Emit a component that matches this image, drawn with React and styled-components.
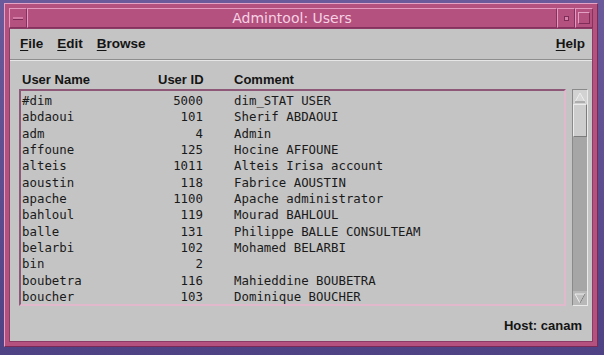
import React from "react";
import styled, { createGlobalStyle } from "styled-components";

const users = [
  ["#dim", "5000", "dim_STAT USER"],
  ["abdaoui", "101", "Sherif ABDAOUI"],
  ["adm", "4", "Admin"],
  ["affoune", "125", "Hocine AFFOUNE"],
  ["alteis", "1011", "Alteis Irisa account"],
  ["aoustin", "118", "Fabrice AOUSTIN"],
  ["apache", "1100", "Apache administrator"],
  ["bahloul", "119", "Mourad BAHLOUL"],
  ["balle", "131", "Philippe BALLE CONSULTEAM"],
  ["belarbi", "102", "Mohamed BELARBI"],
  ["bin", "2", ""],
  ["boubetra", "116", "Mahieddine BOUBETRA"],
  ["boucher", "103", "Dominique BOUCHER"],
];

const GlobalStyle = createGlobalStyle`
  body {
    margin: 0;
    background: #5b4c8c;
    font-family: "Liberation Sans", Arial, sans-serif;
  }
`;

const Desktop = styled.div`
  width: 604px;
  height: 355px;
  background: linear-gradient(180deg, #6a5a9c 0%, #4f4284 100%);
  padding: 3px 6px 8px 4px;
  box-sizing: border-box;
`;

const Window = styled.div`
  height: 100%;
  display: flex;
  flex-direction: column;
  background: #b4517f;
  border: 1px solid #e6a2c4;
  border-right-color: #7a2a56;
  border-bottom-color: #7a2a56;
  padding: 4px;
  box-sizing: border-box;
`;

const TitleBar = styled.div`
  height: 20px;
  display: flex;
  align-items: stretch;
`;

const FrameButton = styled.div`
  width: 18px;
  display: flex;
  align-items: center;
  justify-content: center;
  border: 1px solid #e49ac0;
  border-right-color: #86325e;
  border-bottom-color: #86325e;
  box-sizing: border-box;
`;

const Dash = styled.span`
  width: 10px;
  height: 2px;
  background: #d27aa4;
  border-bottom: 1px solid #7e2c58;
`;

const Dot = styled.span`
  width: 3px;
  height: 3px;
  background: #d680aa;
  border: 1px solid #7e2c58;
`;

const Square = styled.span`
  width: 10px;
  height: 10px;
  border: 1px solid #e2a0c2;
  border-right-color: #7e2c58;
  border-bottom-color: #7e2c58;
`;

const Title = styled.div`
  flex: 1;
  display: flex;
  align-items: center;
  justify-content: center;
  color: #f6d2e4;
  font-family: "DejaVu Sans", sans-serif;
  font-size: 14px;
  border: 1px solid #e49ac0;
  border-right-color: #86325e;
  border-bottom-color: #86325e;
`;

const Body = styled.div`
  flex: 1;
  display: flex;
  flex-direction: column;
  background: #c4c4c4;
  border: 1px solid #8c3a66;
`;

const MenuBar = styled.div`
  height: 29px;
  display: flex;
  align-items: center;
  padding: 0 7px 1px 10px;
  gap: 14px;
  border-bottom: 1px solid #8e8e8e;
  box-shadow: 0 1px 0 #e6e6e6;
`;

const MenuItem = styled.span`
  font-weight: bold;
  font-size: 13.5px;
  color: #141414;
  margin-left: ${({ push }) => (push ? "auto" : "0")};
`;

const Key = styled.span`
  text-decoration: underline;
  text-underline-offset: 2px;
`;

const Content = styled.div`
  flex: 1;
  display: flex;
  flex-direction: column;
  padding: 10px 4px 0 9px;
`;

const HeaderRow = styled.div`
  display: grid;
  grid-template-columns: 136px 76px 1fr;
  padding-left: 3px;
  height: 18px;
  align-items: center;
  font-weight: bold;
  font-size: 13px;
  color: #141414;
`;

const ListRow = styled.div`
  display: flex;
  gap: 6px;
  margin-top: 1px;
  height: 217px;
`;

const ListBox = styled.div`
  flex: 1;
  border: 2px solid #e2b8cc;
  border-top-color: #8e5878;
  border-left-color: #8e5878;
  padding: 2px 0 0 1px;
  overflow: hidden;
  font-family: "DejaVu Sans Mono", "Liberation Mono", monospace;
  font-size: 12.4px;
  color: #1a1a1a;
`;

const Row = styled.div`
  display: grid;
  grid-template-columns: 120px 61px 1fr;
  height: 16.33px;
  line-height: 16px;
  white-space: pre;
`;

const Id = styled.span`
  text-align: right;
`;

const Comment = styled.span`
  padding-left: 31px;
`;

const ScrollBar = styled.div`
  width: 16px;
  display: flex;
  flex-direction: column;
  background: #a6a6a6;
  border: 1px solid #8a8a8a;
  border-right-color: #eaeaea;
  border-bottom-color: #eaeaea;
  box-sizing: border-box;
`;

const Arrow = styled.div`
  height: 14px;
  display: flex;
  align-items: center;
  justify-content: center;
  background: ${({ up }) => (up ? "#d2d2d2" : "#b8b8b8")};
`;

const Thumb = styled.div`
  height: 31px;
  background: #cdcdcd;
  border: 1px solid #ececec;
  border-right-color: #7c7c7c;
  border-bottom-color: #7c7c7c;
`;

const Track = styled.div`
  flex: 1;
`;

const Footer = styled.div`
  flex: 1;
  display: flex;
  align-items: center;
  justify-content: flex-end;
  padding: 4px 6px 0 0;
  font-weight: bold;
  font-size: 13px;
  color: #141414;
`;

function Triangle({ down }) {
  return (
    <svg width="12" height="11" viewBox="0 0 12 11">
      <polygon
        points={down ? "1,1 11,1 6,10" : "6,1 11,10 1,10"}
        fill={down ? "#c0c0c0" : "#d8d8d8"}
        stroke="#ededed"
      />
      <polyline
        points={down ? "11,1 6,10" : "11,10 1,10"}
        fill="none"
        stroke="#7a7a7a"
      />
    </svg>
  );
}

export default function App() {
  return (
    <>
      <GlobalStyle />
      <Desktop>
        <Window>
          <TitleBar>
            <FrameButton>
              <Dash />
            </FrameButton>
            <Title>Admintool: Users</Title>
            <FrameButton>
              <Dot />
            </FrameButton>
            <FrameButton>
              <Square />
            </FrameButton>
          </TitleBar>
          <Body>
            <MenuBar>
              <MenuItem>
                <Key>F</Key>ile
              </MenuItem>
              <MenuItem>
                <Key>E</Key>dit
              </MenuItem>
              <MenuItem>
                <Key>B</Key>rowse
              </MenuItem>
              <MenuItem push>
                <Key>H</Key>elp
              </MenuItem>
            </MenuBar>
            <Content>
              <HeaderRow>
                <span>User Name</span>
                <span>User ID</span>
                <span>Comment</span>
              </HeaderRow>
              <ListRow>
                <ListBox>
                  {users.map(([name, id, comment]) => (
                    <Row key={name}>
                      <span>{name}</span>
                      <Id>{id}</Id>
                      <Comment>{comment}</Comment>
                    </Row>
                  ))}
                </ListBox>
                <ScrollBar>
                  <Arrow up>
                    <Triangle />
                  </Arrow>
                  <Thumb />
                  <Track />
                  <Arrow>
                    <Triangle down />
                  </Arrow>
                </ScrollBar>
              </ListRow>
              <Footer>Host: canam</Footer>
            </Content>
          </Body>
        </Window>
      </Desktop>
    </>
  );
}
